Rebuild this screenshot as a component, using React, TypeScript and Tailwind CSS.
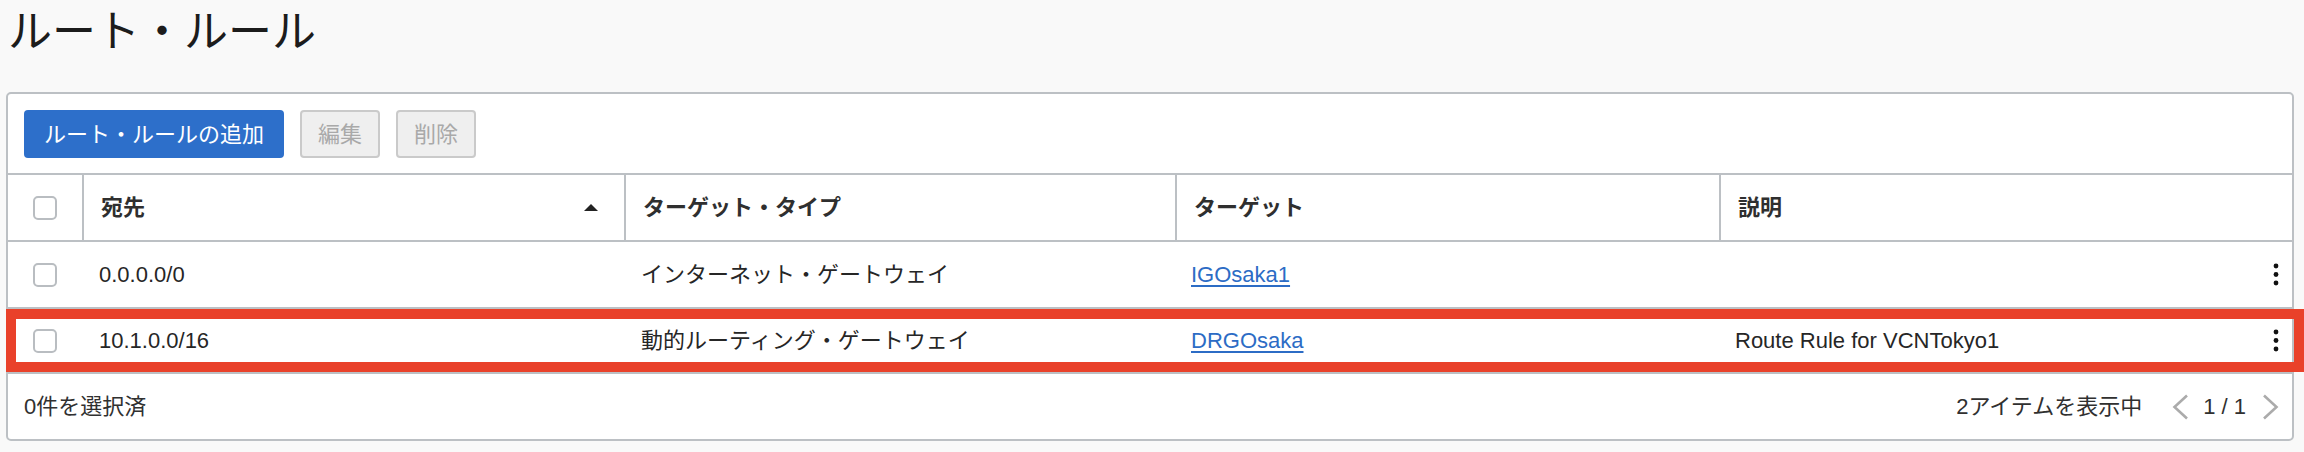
import React from 'react';

const font = { fontFamily: '"Liberation Sans", "Noto Sans CJK JP", sans-serif' };

const Checkbox = () => (
  <div className="w-[24px] h-[24px] border-2 border-[#b9bdc1] rounded-[5px] bg-white" />
);

const Dots = () => (
  <svg width="8" height="26" viewBox="0 0 8 26" className="text-[#111]">
    <circle cx="4" cy="4" r="2.4" fill="currentColor" />
    <circle cx="4" cy="12.5" r="2.4" fill="currentColor" />
    <circle cx="4" cy="21" r="2.4" fill="currentColor" />
  </svg>
);

const Chevron = ({ dir }: { dir: 'left' | 'right' }) => (
  <svg width="17" height="26" viewBox="0 0 17 26">
    <polyline
      points={dir === 'left' ? '15,1.5 2.5,13 15,24.5' : '2,1.5 14.5,13 2,24.5'}
      fill="none"
      stroke="#ababab"
      strokeWidth="2.6"
    />
  </svg>
);

const cols = 'grid grid-cols-[74px_542px_551px_544px_1fr]';

interface Rule {
  dest: string;
  type: string;
  target: string;
  desc: string;
}

const rules: Rule[] = [
  { dest: '0.0.0.0/0', type: 'インターネット・ゲートウェイ', target: 'IGOsaka1', desc: '' },
  { dest: '10.1.0.0/16', type: '動的ルーティング・ゲートウェイ', target: 'DRGOsaka', desc: 'Route Rule for VCNTokyo1' },
];

export default function App() {
  return (
    <div className="min-h-screen bg-[#f9f9f9] pl-[6px] pr-[10px] text-[#262626]" style={font}>
      <h1 className="h-[64px] leading-[64px] pl-[2px] text-[44px] font-normal text-[#1c1c1c]">
        ルート・ルール
      </h1>

      <div className="mt-[28px] bg-white border-2 border-[#bcc0c4] rounded-[5px]">
        <div className="flex gap-[16px] px-[16px] pt-[16px] pb-[15px] border-b-2 border-[#bcc0c4]">
          <button className="h-[48px] px-[20px] rounded-[4px] bg-[#2d6fca] text-white text-[22px]">
            ルート・ルールの追加
          </button>
          <button className="h-[48px] px-[16px] rounded-[4px] bg-[#efefef] border-2 border-[#cacaca] text-[#a9a9a9] text-[22px]">
            編集
          </button>
          <button className="h-[48px] px-[16px] rounded-[4px] bg-[#efefef] border-2 border-[#cacaca] text-[#a9a9a9] text-[22px]">
            削除
          </button>
        </div>

        <div className={`${cols} h-[67px] border-b-2 border-[#bcc0c4] text-[22px] font-bold text-[#2f2f2f]`}>
          <div className="flex items-center justify-center">
            <Checkbox />
          </div>
          <div className="flex items-center justify-between pl-[17px] pr-[26px] border-l-2 border-[#bcc0c4]">
            <span>宛先</span>
            <svg width="14" height="7" viewBox="0 0 14 7">
              <polygon points="0,7 7,0 14,7" fill="#222" />
            </svg>
          </div>
          <div className="flex items-center pl-[17px] border-l-2 border-[#bcc0c4]">ターゲット・タイプ</div>
          <div className="flex items-center pl-[17px] border-l-2 border-[#bcc0c4]">ターゲット</div>
          <div className="flex items-center pl-[17px] border-l-2 border-[#bcc0c4]">説明</div>
        </div>

        {rules.map((r, i) => (
          <div
            key={r.dest}
            className={`relative ${cols} ${i === 0 ? 'h-[67px]' : 'h-[65px]'} border-b-2 border-[#bcc0c4] text-[22px]`}
          >
            <div className="flex items-center justify-center">
              <Checkbox />
            </div>
            <div className="flex items-center pl-[17px]">{r.dest}</div>
            <div className="flex items-center pl-[17px]">{r.type}</div>
            <div className="flex items-center pl-[16px]">
              <a href="#" className="text-[#2c6cc5] underline underline-offset-[3px]">
                {r.target}
              </a>
            </div>
            <div className="flex items-center justify-between pl-[16px] pr-[12px]">
              <span>{r.desc}</span>
              <Dots />
            </div>
            {i === 1 && (
              <div className="absolute top-0 bottom-0 -left-[2px] -right-[12px] border-[10px] border-[#e9412a] pointer-events-none" />
            )}
          </div>
        ))}

        <div className="flex items-center justify-between h-[65px] pl-[16px] pr-[13px] text-[22px] text-[#303030]">
          <span>0件を選択済</span>
          <div className="flex items-center">
            <span>2アイテムを表示中</span>
            <span className="ml-[30px] flex">
              <Chevron dir="left" />
            </span>
            <span className="ml-[14px]">1 / 1</span>
            <span className="ml-[16px] flex">
              <Chevron dir="right" />
            </span>
          </div>
        </div>
      </div>
    </div>
  );
}
